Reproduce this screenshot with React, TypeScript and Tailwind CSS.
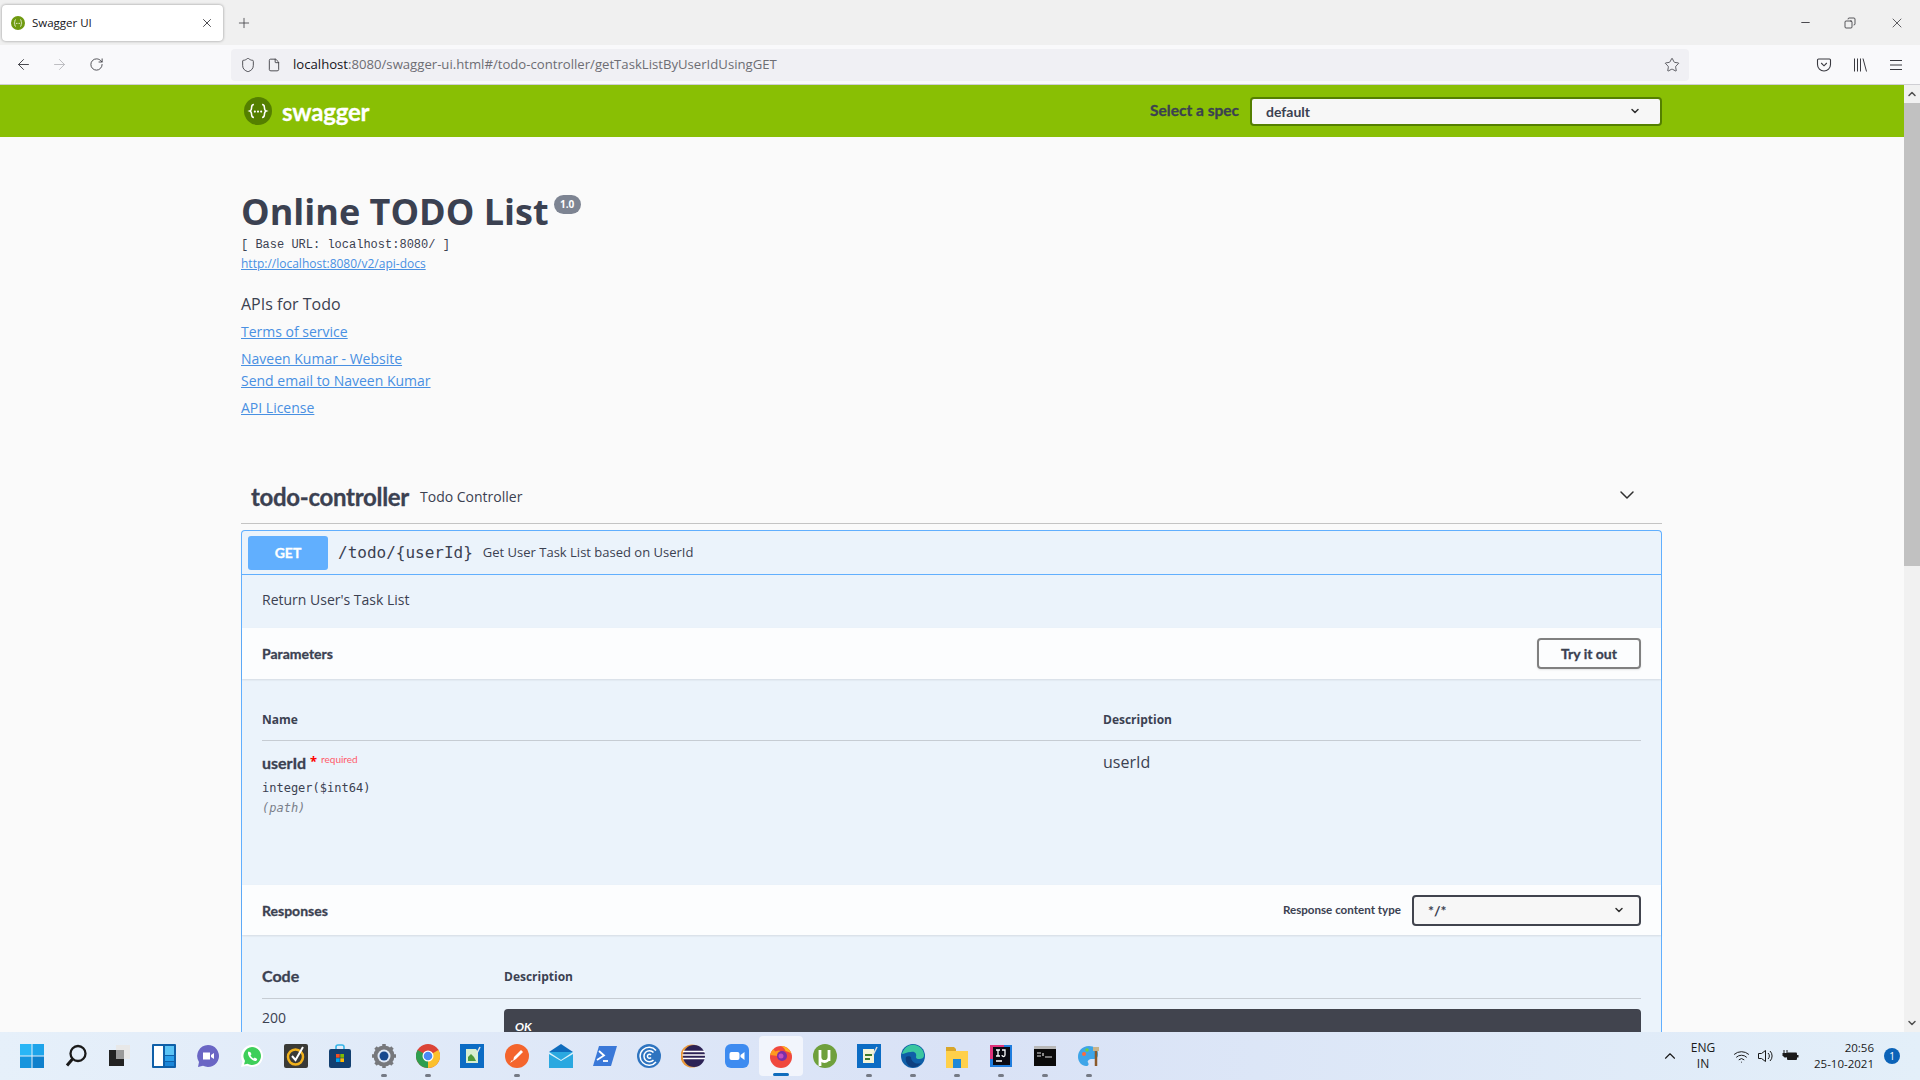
import { ArrowLeft, ArrowRight, ChevronDown, ChevronUp, Copy, File, Minus, Plus, RotateCw, Shield, Star, Wifi, X } from "lucide-react";
import type { ReactNode } from "react";

const sans = "font-['Open_Sans',sans-serif]";
const head = "font-['Lato',sans-serif]";
const mono = "font-['DejaVu_Sans_Mono','Liberation_Mono',monospace]";
const thick = "[-webkit-text-stroke:0.3px]";

function SwaggerMark({ size, bg }: { size: number; bg: string }) {
  return (
    <svg width={size} height={size} viewBox="0 0 24 24">
      <circle cx="12" cy="12" r="12" fill={bg} />
      <path d="M8.500 6.500c-2 0-2 1-2 2.500s0 2.500-1.500 3c1.500.5 1.500 1.500 1.500 3s0 2.500 2 2.500M15.500 6.500c2 0 2 1 2 2.500s0 2.500 1.500 3c-1.500.5-1.500 1.500-1.500 3s0 2.500-2 2.500" fill="none" stroke="#fff" strokeWidth="1.300" />
      <circle cx="9.300" cy="12.500" r=".9" fill="#fff" />
      <circle cx="12" cy="12.500" r=".9" fill="#fff" />
      <circle cx="14.700" cy="12.500" r=".9" fill="#fff" />
    </svg>
  );
}

function Tab() {
  return (
    <div className="flex h-[45px] items-center bg-[#f0f0f0] pl-[2px]">
      <div className="flex h-[36px] w-[221px] items-center rounded-[4px] bg-white pl-[9px] pr-[9px] shadow-[0_0_3px_rgba(0,0,0,0.4)]">
        <SwaggerMark size={14} bg="#6f9a10" />
        <span className={`ml-[7px] flex-1 text-[11.500px] text-[#15141a] ${sans}`}>Swagger UI</span>
        <X size={14} strokeWidth={1.300} className="text-[#15141a]" />
      </div>
      <Plus size={16} strokeWidth={1.200} className="ml-[13px] text-[#3a3a40]" />
      <div className="ml-auto flex items-center text-[#15141a]">
        <Minus size={13} strokeWidth={1.400} className="mr-[32px]" />
        <Copy size={12} strokeWidth={1.400} className="mr-[33px] -scale-x-100" />
        <X size={16} strokeWidth={1} className="mr-[15px]" />
      </div>
    </div>
  );
}

function Toolbar() {
  return (
    <div className="flex h-[40px] items-center border-b border-[#cfcfd4] bg-[#f9f9fb] pl-[15px]">
      <ArrowLeft size={17} strokeWidth={1.300} className="text-[#3a3a40]" />
      <ArrowRight size={17} strokeWidth={1.300} className="ml-[19px] text-[#b8b8bc]" />
      <RotateCw size={15} strokeWidth={1.400} className="ml-[21px] text-[#3a3a40]" />
      <div className="ml-[127px] flex h-[32px] w-[1458px] items-center rounded-[4px] bg-[#f0f0f4] pl-[9px] pr-[9px]">
        <Shield size={16} strokeWidth={1.300} className="text-[#3a3a40]" />
        <File size={14} strokeWidth={1.500} className="ml-[11px] text-[#3a3a40]" />
        <span className={`ml-[12px] flex-1 text-[13.150px] text-[#6d6d73] ${sans}`}>
          <span className="text-[#15141a]">localhost</span>:8080/swagger-ui.html#/todo-controller/getTaskListByUserIdUsingGET
        </span>
        <Star size={16} strokeWidth={1.200} className="text-[#3a3a40]" />
      </div>
      <svg width="16" height="16" viewBox="0 0 16 16" className="ml-[127px]" fill="none" stroke="#3a3a40" strokeWidth="1.100">
        <path d="M2.500 2h11a1 1 0 0 1 1 1v4.500a6.500 6.500 0 0 1-13 0V3a1 1 0 0 1 1-1z" />
        <path d="M5.200 6l2.800 2.800L10.800 6" />
      </svg>
      <svg width="16" height="16" viewBox="0 0 16 16" className="ml-[20px]" fill="none" stroke="#3a3a40" strokeWidth="1">
        <path d="M2.500 1.500v13M5.500 1.500v13M8.500 1.500v13M11 1.500l3.500 13" />
      </svg>
      <svg width="16" height="16" viewBox="0 0 16 16" className="ml-[20px]" fill="none" stroke="#3a3a40" strokeWidth="1.100">
        <path d="M2 3.500h12M2 8h12M2 12.500h12" />
      </svg>
    </div>
  );
}

function Chevron({ size = 12 }: { size?: number }) {
  return <ChevronDown size={size} strokeWidth={3} className="text-[#303030]" />;
}

function SwaggerHeader() {
  return (
    <div className="h-[52px] bg-[#89bf04]">
      <div className="mx-auto flex h-full w-[1460px] items-center pl-[22px] pr-[20px]">
        <SwaggerMark size={28} bg="#547f00" />
        <span className={`ml-[10px] mt-[2px] text-[24px] font-bold tracking-[-0.2px] text-white ${head} ${thick}`}>swagger</span>
        <span className={`ml-auto text-[15.500px] font-bold text-[#3b4151] ${head} ${thick}`}>Select a spec</span>
        <div className={`ml-[11px] flex h-[29px] w-[412px] items-center justify-between rounded-[4px] border-2 border-[#547f00] bg-[#f7f7f7] pl-[14px] pr-[19px] text-[14px] font-bold text-[#3b4151] ${head}`}>
          default
          <Chevron />
        </div>
      </div>
    </div>
  );
}

function InfoLink({ children, className }: { children: ReactNode; className: string }) {
  return <a className={`block w-fit text-[14px] leading-[20px] text-[#4990e2] underline ${sans} ${className}`}>{children}</a>;
}

function Info() {
  return (
    <div className="pt-[53px]">
      <div className="flex items-start">
        <h1 className={`text-[36px] font-bold leading-[44px] text-[#3b4151] ${sans}`}>Online TODO List</h1>
        <span className={`ml-[5px] mt-[5px] flex h-[19px] w-[27px] items-center justify-center rounded-[10px] bg-[#7d8492] text-[10px] font-bold text-white ${sans}`}>1.0</span>
      </div>
      <p className="mt-[3px] font-['Liberation_Mono',monospace] text-[12px] leading-[16px] text-[#3b4151]">[ Base URL: localhost:8080/ ]</p>
      <a className={`mt-[3px] block w-fit text-[12px] leading-[16px] text-[#4990e2] underline ${sans}`}>http://localhost:8080/v2/api-docs</a>
      <p className={`mt-[21px] text-[16px] leading-[22px] text-[#3b4151] ${sans}`}>APIs for Todo</p>
      <InfoLink className="mt-[7px]">Terms of service</InfoLink>
      <InfoLink className="mt-[7px]">Naveen Kumar - Website</InfoLink>
      <InfoLink className="mt-[2px]">Send email to Naveen Kumar</InfoLink>
      <InfoLink className="mt-[7px]">API License</InfoLink>
    </div>
  );
}

function Operation() {
  return (
    <div className="mt-[6px] rounded-t-[4px] border-x border-t border-[#61affe] bg-[#ebf3fb] pb-[100px]">
      <div className="flex h-[44px] items-center border-b border-[#61affe] pl-[6px]">
        <div className={`flex h-[34px] w-[80px] items-center justify-center rounded-[3px] bg-[#61affe] text-[14px] font-bold text-white ${head} ${thick}`}>GET</div>
        <span className={`ml-[10px] text-[16px] text-[#3b4151] ${mono}`}>{"/todo/{userId}"}</span>
        <span className={`ml-[10px] text-[13px] text-[#3b4151] ${sans}`}>Get User Task List based on UserId</span>
      </div>
      <div className={`flex h-[53px] items-start pl-5 pt-[15px] text-[14px] leading-[20px] text-[#3b4151] ${sans}`}>Return User's Task List</div>

      <div className="flex h-[51px] items-center justify-between bg-[#fcfdfe] px-5 shadow-[0_1px_2px_rgba(0,0,0,0.1)]">
        <span className={`text-[14px] font-bold text-[#3b4151] ${head} ${thick}`}>Parameters</span>
        <div className={`flex h-[31px] w-[104px] items-center justify-center rounded-[4px] border-2 border-[#808080] text-[14px] font-bold text-[#3b4151] shadow-[0_1px_2px_rgba(0,0,0,0.1)] ${head} ${thick}`}>Try it out</div>
      </div>

      <div className="h-[206px] px-5">
        <div className={`flex h-[62px] items-end border-b border-[#c6ccd3] pb-[12px] text-[12px] font-bold leading-[16px] text-[#3b4151] ${sans}`}>
          <span className="w-[841px]">Name</span>
          <span>Description</span>
        </div>
        <div className="flex pt-[10px]">
          <div className="w-[841px]">
            <div className="flex items-start">
              <span className={`text-[16px] font-bold leading-[24px] text-[#3b4151] ${head} ${thick}`}>userId</span>
              <span className="ml-[4px] text-[13px] font-bold leading-[20px] text-[#ff0000]">*</span>
              <span className={`ml-[4px] text-[10px] leading-[16px] text-[#ff5a6a] ${head}`}>required</span>
            </div>
            <p className={`mt-[5px] text-[12px] leading-[16px] text-[#3b4151] ${mono}`}>integer($int64)</p>
            <p className={`mt-[4px] text-[12px] italic leading-[16px] text-[#7a7f8a] ${mono}`}>(path)</p>
          </div>
          <span className={`text-[16px] leading-[22px] text-[#3b4151] ${sans}`}>userId</span>
        </div>
      </div>

      <div className="flex h-[50px] items-center bg-[#fcfdfe] px-5 shadow-[0_1px_2px_rgba(0,0,0,0.1)]">
        <span className={`text-[14px] font-bold text-[#3b4151] ${head} ${thick}`}>Responses</span>
        <span className={`ml-auto text-[11.600px] font-bold text-[#3b4151] ${head}`}>Response content type</span>
        <div className={`ml-[11px] flex h-[31px] w-[229px] items-center justify-between rounded-[4px] border-2 border-[#41444e] bg-[#f7f7f7] pl-[14px] pr-[14px] text-[14px] font-bold text-[#3b4151] ${head}`}>
          */*
          <Chevron />
        </div>
      </div>

      <div className="px-5">
        <div className={`flex h-[64px] items-end border-b border-[#c6ccd3] pb-[10px] text-[#3b4151] ${head}`}>
          <span className={`w-[242px] text-[16px] font-bold leading-[24px] ${thick}`}>Code</span>
          <span className={`text-[12px] font-bold leading-[22px] ${sans}`}>Description</span>
        </div>
        <div className="flex pt-[10px]">
          <span className={`-mt-[1px] w-[242px] text-[14px] leading-[20px] text-[#3b4151] ${sans}`}>200</span>
          <div className={`h-[60px] flex-1 rounded-t-[4px] bg-[#41444e] pl-[11px] pt-[9px] text-[12px] font-bold italic text-white ${head}`}>OK</div>
        </div>
      </div>
    </div>
  );
}

function Scrollbar() {
  return (
    <div className="flex w-[16px] flex-col items-center bg-[#f1f1f1]">
      <ChevronUp size={12} strokeWidth={3} className="my-[3px] text-[#505050]" />
      <div className="h-[463px] w-full bg-[#c1c1c1]" />
      <div className="flex-1" />
      <ChevronDown size={12} strokeWidth={3} className="my-[3px] text-[#505050]" />
    </div>
  );
}

const taskIcons: { running?: boolean; active?: boolean; icon: ReactNode }[] = [
  { icon: <svg width="24" height="24" viewBox="0 0 24 24"><path d="M0 0h11.500v11.500H0z" fill="#29b6f6" /><path d="M12.500 0H24v11.500H12.500z" fill="#1ea4ea" /><path d="M0 12.500h11.500V24H0z" fill="#1795dd" /><path d="M12.500 12.500H24V24H12.500z" fill="#0f80cc" /></svg> },
  { icon: <svg width="24" height="24" viewBox="0 0 24 24" fill="none" stroke="#1a1a1a" strokeWidth="2.300"><circle cx="14" cy="9.500" r="7.500" /><path d="M8.500 15 3 21.500" strokeWidth="3" /></svg> },
  { icon: <svg width="24" height="24" viewBox="0 0 24 24"><path d="M8 1h14v14H8z" fill="#e8e8e8" /><path d="M1 6h15v16H1z" fill="#222" /><path d="M8 6h8v9H8z" fill="#9a9a9a" /></svg> },
  { icon: <svg width="24" height="24" viewBox="0 0 24 24"><rect width="24" height="24" rx="1" fill="#0f5fa8" /><path d="M2 2h9v20H2z" fill="#fff" /><path d="M13 2h9v9h-9z" fill="#5cc4f5" /><path d="M13 12h9v5h-9z" fill="#2ca0ea" /><path d="M13 18h9v4h-9z" fill="#1b86d8" /></svg> },
  { icon: <svg width="24" height="24" viewBox="0 0 24 24"><path d="M12 1a11 11 0 1 1-5 20.800L2 23l1-5A11 11 0 0 1 12 1z" fill="#6a66c4" /><path d="M7 8.500h7v7H7zM15 11l3-2v6l-3-2z" fill="#fff" /></svg> },
  { icon: <svg width="24" height="24" viewBox="0 0 24 24"><path d="M12 1a11 11 0 1 1-5 20.800L1 23l1.500-5.500A11 11 0 0 1 12 1z" fill="#fff" /><path d="M12 3a9 9 0 1 1-4.500 16.800L4 20.500l1-3.500A9 9 0 0 1 12 3z" fill="#3ecf5a" /><path d="M8.500 7.500c-2 2 1.500 8.500 6.500 9.500 2 0 2.800-1.800 1.500-2.500l-1.800-1-1 1c-1.500-.5-2.700-1.800-3.200-3.200l1-1-1-2z" fill="#fff" /></svg> },
  { icon: <svg width="24" height="24" viewBox="0 0 24 24"><rect width="24" height="24" rx="2" fill="#3a3a36" /><circle cx="11.500" cy="13" r="7.500" fill="none" stroke="#f2b21c" strokeWidth="2.500" /><path d="M8 12l3.500 4L19 3" fill="none" stroke="#fff" strokeWidth="2" /></svg> },
  { icon: <svg width="24" height="24" viewBox="0 0 24 24"><path d="M8 6V3a2 2 0 0 1 2-2h4a2 2 0 0 1 2 2v3" fill="none" stroke="#36b5e8" strokeWidth="1.600" /><rect x="1" y="5" width="22" height="19" rx="2" fill="#123f70" /><path d="M8 10h3.700v3.700H8z" fill="#f25022" /><path d="M12.300 10H16v3.700h-3.700z" fill="#7fba00" /><path d="M8 14.300h3.700V18H8z" fill="#00a4ef" /><path d="M12.300 14.300H16V18h-3.700z" fill="#ffb900" /></svg> },
  { running: true, icon: <svg width="24" height="24" viewBox="0 0 24 24"><circle cx="12" cy="12" r="8" fill="none" stroke="#77787c" strokeWidth="5" /><path d="M12 0v24M0 12h24M3.500 3.500l17 17M20.500 3.500l-17 17" stroke="#77787c" strokeWidth="3.500" /><circle cx="12" cy="12" r="6.500" fill="#dfe8f7" /><circle cx="12" cy="12" r="4.500" fill="#17488e" /></svg> },
  { running: true, icon: <svg width="24" height="24" viewBox="0 0 24 24"><circle cx="12" cy="12" r="12" fill="#db4437" /><path d="M12 12 22.400 6A12 12 0 0 1 12 24z" fill="#fbc02d" /><path d="M12 12 12 24A12 12 0 0 1 1.600 6z" fill="#2e9e4f" /><circle cx="12" cy="12" r="5.500" fill="#fff" /><circle cx="12" cy="12" r="4.300" fill="#4a8af4" /></svg> },
  { icon: <svg width="24" height="24" viewBox="0 0 24 24"><rect width="24" height="24" fill="#0c6cc4" /><path d="M6 5h10l2 3v11H6z" fill="#d8eed0" /><path d="M8 13l3-3 3 3 2 4H8z" fill="#4d9a3a" /><path d="M17 9l3-6" stroke="#e6e6e6" strokeWidth="1.500" /></svg> },
  { running: true, icon: <svg width="24" height="24" viewBox="0 0 24 24"><circle cx="12" cy="12" r="12" fill="#f4652d" /><path d="M8 17l1-4 7-7 2 2-7 7z" fill="#fff" /><path d="M5 19l3-2-1-1z" fill="#fff" /></svg> },
  { icon: <svg width="24" height="24" viewBox="0 0 24 24"><path d="M0 8 12 0l12 8v16H0z" fill="#0f6cbd" /><path d="M0 8h24v16H0z" fill="#2aa8e0" /><path d="M0 8l12 8 12-8v2l-12 7L0 10z" fill="#d9f1fb" /></svg> },
  { icon: <svg width="24" height="24" viewBox="0 0 24 24"><path d="M6 2h18l-6 20H0z" fill="#3a78d8" /><path d="M6 7l5 4.500L4 16" fill="none" stroke="#fff" strokeWidth="1.800" /><path d="M10 17h5" stroke="#fff" strokeWidth="1.800" /></svg> },
  { icon: <svg width="24" height="24" viewBox="0 0 24 24" fill="none"><circle cx="12" cy="12" r="12" fill="#2e74c0" /><path d="M19 6.500A9 9 0 1 0 19 18M16.500 8.500a5.500 5.500 0 1 0 0 7.500M14 11a2 2 0 1 0 0 2.500" stroke="#fff" strokeWidth="1.500" /></svg> },
  { icon: <svg width="24" height="24" viewBox="0 0 24 24"><circle cx="11" cy="12" r="11.500" fill="#e8973a" /><circle cx="13" cy="12" r="11" fill="#2c2255" /><path d="M2 7.500h22M1.500 11h23M2 14.500h22" stroke="#fff" strokeWidth="1.300" /></svg> },
  { icon: <svg width="24" height="24" viewBox="0 0 24 24"><rect width="24" height="24" rx="6" fill="#3d8bf0" /><rect x="4.500" y="8" width="10" height="8" rx="2" fill="#fff" /><path d="M15.500 11l4-3v8l-4-3z" fill="#fff" /></svg> },
  { active: true, icon: <svg width="24" height="24" viewBox="0 0 24 24"><circle cx="12" cy="13" r="11" fill="#f0483e" /><path d="M22.500 10A11 11 0 0 0 12 2c3 2 4 3 4.500 5C20 8 22 9 22.500 10z" fill="#ffb01f" /><path d="M1 11c1-3 2-5 4-6 0 1 .5 2 1.500 2.500C9 6 11 6 12 7.500 8 8 8 11 9 12z" fill="#ff9a1f" /><circle cx="13" cy="12" r="5" fill="#7a2ea8" /><circle cx="12" cy="12" r="2.500" fill="#c14ec0" /></svg> },
  { icon: <svg width="24" height="24" viewBox="0 0 24 24"><circle cx="12" cy="12" r="12" fill="#6fa03c" /><path d="M7 6v7a4.500 4.500 0 0 0 9 0V6M16 6v11M7 12v10" fill="none" stroke="#fff" strokeWidth="2.800" /></svg> },
  { running: true, icon: <svg width="24" height="24" viewBox="0 0 24 24"><rect width="24" height="24" fill="#0c6cc4" /><path d="M6 5h11v14H6z" fill="#f4f4d8" /><path d="M8 10h7v2H8zM8 14h5v2H8z" fill="#3c7a2c" /><path d="M16 11l4-8" stroke="#ddd" strokeWidth="1.500" /></svg> },
  { running: true, icon: <svg width="24" height="24" viewBox="0 0 24 24"><circle cx="12" cy="12" r="12" fill="#0f5fa8" /><path d="M1 10C3 3 9 0 14 1c5 1 9 5 9 10 0 3-2 4-5 4-2 0-3-.5-3-2 1-3-1-6-5-5-4 0-7 2-9 2z" fill="#3ac6a0" /><path d="M10 13c0 4 4 8 10 6-2 3-6 5-10 4-4-2-6-6-5-10 1-1 4-1 5 0z" fill="#0d3f7f" /></svg> },
  { running: true, icon: <svg width="24" height="24" viewBox="0 0 24 24"><path d="M1 3h8l2 2v3H1z" fill="#d9a62a" /><path d="M1 7h22v17H1z" fill="#ffd04a" /><path d="M8 15h8v9H8z" fill="#1e88d8" /></svg> },
  { running: true, icon: <svg width="24" height="24" viewBox="0 0 24 24"><rect x="1" y="1" width="22" height="22" fill="#1f7dde" /><rect x="1" y="1" width="14" height="14" fill="#e0337b" /><rect x="4" y="3" width="17" height="18" fill="#0a0a12" /><path d="M7 6h4M9 6v6M7 12h4M13 6h3v5a1.500 1.500 0 0 1-3 0M7 17h6" fill="none" stroke="#fff" strokeWidth="1.300" /></svg> },
  { running: true, icon: <svg width="24" height="24" viewBox="0 0 24 24"><rect x="1" y="2" width="22" height="20" fill="#0a0a0a" /><rect x="1" y="2" width="22" height="3" fill="#b8b8b8" /><path d="M4 9h4M4 12h4M10 9v3M12 13h7" stroke="#e0e0e0" strokeWidth="1.200" /></svg> },
  { running: true, icon: <svg width="24" height="24" viewBox="0 0 24 24"><path d="M12 2C5 2 1 7 1 13c0 5 4 9 8 9 3 0 3-2 2-3.500S12 15 15 15c3 0 6 0 6-5 0-5-4-8-9-8z" fill="#3ea5e8" /><circle cx="7" cy="10" r="2" fill="#ff6a3a" /><circle cx="10" cy="6" r="1.800" fill="#6fcf3f" /><path d="M19 3v19" stroke="#8a5a2a" strokeWidth="2.500" /><path d="M16 3h6v4h-6z" fill="#c9b48a" /></svg> },
];

function Taskbar() {
  return (
    <div className="flex h-[48px] items-center bg-gradient-to-r from-[#e6f0fa] via-[#d9e2f6] to-[#e3eff9] pl-[10px]">
      {taskIcons.map((t, i) => (
        <div key={i} className={`relative flex h-[40px] w-[44.050px] items-center justify-center rounded-[4px] ${t.active ? "bg-[#f2f5fc]" : ""}`}>
          {t.icon}
          {t.running ? <span className="absolute bottom-[-1px] h-[3px] w-[6px] rounded-full bg-[#757a85]" /> : null}
          {t.active ? <span className="absolute bottom-0 h-[3px] w-[16px] rounded-full bg-[#0f6cbd]" /> : null}
        </div>
      ))}
      <div className={`ml-auto flex items-center pr-[20px] text-[12px] leading-[16px] text-[#1a1a1a] ${sans}`}>
        <ChevronUp size={18} strokeWidth={1.500} />
        <div className="ml-[8px] flex w-[32px] flex-col items-center">
          <span>ENG</span>
          <span>IN</span>
        </div>
        <Wifi size={17} strokeWidth={1.400} className="ml-[14px]" />
        <svg width="18" height="16" viewBox="0 0 18 16" className="ml-[7px]" fill="none" stroke="#1a1a1a" strokeWidth="1">
          <path d="M1.500 5.500h3L8.500 2.500v11L4.500 10.500h-3zM11 5a4 4 0 0 1 0 6M13 3a7 7 0 0 1 0 10" />
        </svg>
        <svg width="18" height="14" viewBox="0 0 18 14" className="ml-[6px]">
          <path d="M3 1v3M6 1v3" stroke="#1a1a1a" strokeWidth="1" />
          <path d="M1.500 4h6v2.500l-2 2h-2l-2-2z" fill="#1a1a1a" />
          <rect x="6" y="3.500" width="10" height="7.500" rx="1" fill="#1a1a1a" />
          <rect x="16" y="6" width="1.500" height="2.500" fill="#1a1a1a" />
        </svg>
        <div className="ml-[15px] flex flex-col items-end text-[11.500px]">
          <span>20:56</span>
          <span>25-10-2021</span>
        </div>
        <span className="ml-[10px] flex h-[16px] w-[16px] items-center justify-center rounded-full bg-[#0b63b8] text-[10px] text-white">1</span>
      </div>
    </div>
  );
}

export default function App() {
  return (
    <div className="flex h-[1080px] w-[1920px] flex-col overflow-hidden bg-[#fafafa]">
      <Tab />
      <Toolbar />
      <div className="flex min-h-0 flex-1">
        <div className="min-w-0 flex-1 overflow-hidden">
          <SwaggerHeader />
          <div className="mx-auto w-[1460px] pl-[19px] pr-5">
            <Info />
            <div className="mt-[53px] flex h-[53px] items-center border-b border-[#c4c4c4] pl-[10px] pr-[23px] text-[#3b4151]">
              <span className={`text-[24px] font-bold tracking-[-0.3px] ${head} ${thick}`}>todo-controller</span>
              <span className={`ml-[11px] -mt-[1px] text-[14px] ${sans}`}>Todo Controller</span>
              <ChevronDown size={24} strokeWidth={1.500} className="mb-[4px] ml-auto text-[#303030]" />
            </div>
            <Operation />
          </div>
        </div>
        <Scrollbar />
      </div>
      <Taskbar />
    </div>
  );
}
